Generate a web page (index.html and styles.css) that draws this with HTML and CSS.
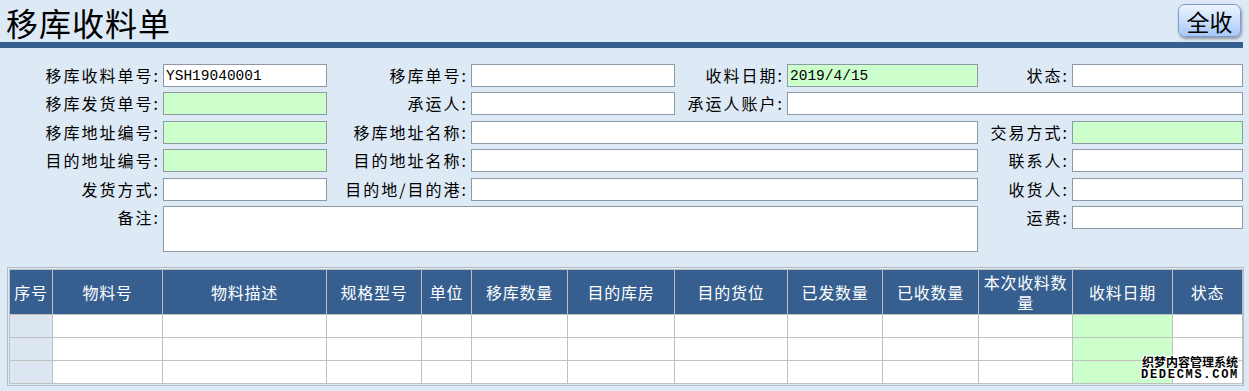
FILE: index.html
```html
<!DOCTYPE html>
<html lang="zh-CN">
<head>
	<meta charset="UTF-8">
	<title>移库收料单</title>
	<link rel="stylesheet" href="styles.css">
</head>
<body>
	<!--标题-->
	<div class="head">
		<h1 class="title">移库收料单</h1>
		<button class="btn">全收</button>
	</div>
	<div class="bar"></div>

	<!--表头信息-->
	<div class="form">
		<label>移库收料单号:</label><input type="text" value="YSH19040001">
		<label>移库单号:</label><input type="text">
		<label>收料日期:</label><input type="text" class="green" value="2019/4/15">
		<label>状态:</label><input type="text">

		<label>移库发货单号:</label><input type="text" class="green">
		<label>承运人:</label><input type="text">
		<label>承运人账户:</label><input type="text" class="span3">

		<label>移库地址编号:</label><input type="text" class="green">
		<label>移库地址名称:</label><input type="text" class="span3">
		<label>交易方式:</label><input type="text" class="green">

		<label>目的地址编号:</label><input type="text" class="green">
		<label>目的地址名称:</label><input type="text" class="span3">
		<label>联系人:</label><input type="text">

		<label>发货方式:</label><input type="text">
		<label>目的地/目的港:</label><input type="text" class="span3">
		<label>收货人:</label><input type="text">

		<label>备注:</label><textarea class="span5"></textarea>
		<label>运费:</label><input type="text">
	</div>

	<!--明细-->
	<div class="grid-wrap">
		<table class="grid">
			<colgroup>
				<col style="width:43px"><col style="width:110px"><col style="width:164px"><col style="width:95px">
				<col style="width:50px"><col style="width:96px"><col style="width:107px"><col style="width:113px">
				<col style="width:95px"><col style="width:96px"><col style="width:94px"><col style="width:100px">
				<col style="width:70px">
			</colgroup>
			<tr>
				<th>序号</th><th>物料号</th><th>物料描述</th><th>规格型号</th><th>单位</th><th>移库数量</th>
				<th>目的库房</th><th>目的货位</th><th>已发数量</th><th>已收数量</th><th>本次收料数量</th>
				<th>收料日期</th><th>状态</th>
			</tr>
			<tr>
				<td class="no"></td><td></td><td></td><td></td><td></td><td></td><td></td>
				<td></td><td></td><td></td><td></td><td class="green"></td><td></td>
			</tr>
			<tr>
				<td class="no"></td><td></td><td></td><td></td><td></td><td></td><td></td>
				<td></td><td></td><td></td><td></td><td class="green"></td><td></td>
			</tr>
			<tr>
				<td class="no"></td><td></td><td></td><td></td><td></td><td></td><td></td>
				<td></td><td></td><td></td><td></td><td class="green"></td><td></td>
			</tr>
		</table>
	</div>

	<!--水印-->
	<div class="mark">
		<div class="mark-cn">织梦内容管理系统</div>
		<div class="mark-en">DEDECMS.COM</div>
	</div>
</body>
</html>
```

FILE: styles.css
```css
*{
	margin:0;
	padding:0;
	box-sizing:border-box;
}
body{
	background:#dde9f5;
	font-family:"Noto Sans CJK SC","Noto Sans",sans-serif;
	color:#000;
	width:1249px;
	height:391px;
	overflow:hidden;
	position:relative;
}

/*标题*/
.head{
	display:flex;
	justify-content:space-between;
	align-items:flex-start;
	height:42px;
	padding:0 8px 0 6px;
}
.title{
	font-size:32px;
	font-weight:normal;
	letter-spacing:1px;
	line-height:44px;
}
.btn{
	margin-top:4px;
	width:63px;
	height:33px;
	font-family:inherit;
	font-size:23px;
	line-height:30px;
	color:#000;
	border:1px solid #7b9cd0;
	border-radius:7px;
	background:linear-gradient(#eef4fe,#c5dafb 60%,#a9c8f8);
	box-shadow:1px 2px 3px rgba(0,0,0,0.35);
}
.bar{
	height:6px;
	width:1243px;
	background:#365f90;
}

/*表头信息*/
.form{
	display:grid;
	grid-template-columns:163px 164px 144px 204px 112px 191px 94px 171px;
	grid-template-rows:repeat(5,23px) 46px;
	row-gap:5.4px;
	align-items:start;
	padding-top:16px;
	width:1243px;
}
.form label{
	text-align:right;
	padding-right:3px;
	font-size:16px;
	letter-spacing:2px;
	line-height:22px;
	white-space:nowrap;
}
.form input,
.form textarea{
	width:100%;
	height:23px;
	border:1px solid #8e99a6;
	background:#fff;
	padding:0 2px;
	font-family:"Liberation Mono",monospace;
	font-size:14.5px;
	outline:none;
}
.form .green{
	background:#ccffcc;
}
.form .span3{
	grid-column:span 3;
}
.form .span5{
	grid-column:span 5;
	height:46px;
	resize:none;
}

/*明细*/
.grid-wrap{
	margin:15px 0 0 7px;
	width:1237px;
	border:1px solid #b3bcc7;
	padding:1px 0 1px 1px;
	background:#dde9f5;
}
.grid{
	border-collapse:collapse;
	table-layout:fixed;
	width:1234px;
}
.grid th{
	height:45px;
	background:#365f90;
	color:#fff;
	font-weight:normal;
	font-size:16px;
	letter-spacing:0.7px;
	line-height:20px;
	border:1px solid #c0c0c0;
	padding:0 2px;
}
.grid td{
	height:23px;
	background:#fff;
	border:1px solid #c0c0c0;
}
.grid td.no{
	background:#dce6f0;
}
.grid td.green{
	background:#ccffcc;
}

/*水印*/
.mark{
	position:absolute;
	left:1139px;
	top:355px;
	width:102px;
	text-align:center;
	font-weight:bold;
	text-shadow:1px 0 #fff,-1px 0 #fff,0 1px #fff,0 -1px #fff,1px 1px #fff,-1px -1px #fff,1px -1px #fff,-1px 1px #fff;
}
.mark-cn{
	font-size:12px;
	line-height:14px;
	letter-spacing:0;
}
.mark-en{
	font-family:"Liberation Mono",monospace;
	font-size:12px;
	line-height:13px;
	letter-spacing:1.7px;
}
```
